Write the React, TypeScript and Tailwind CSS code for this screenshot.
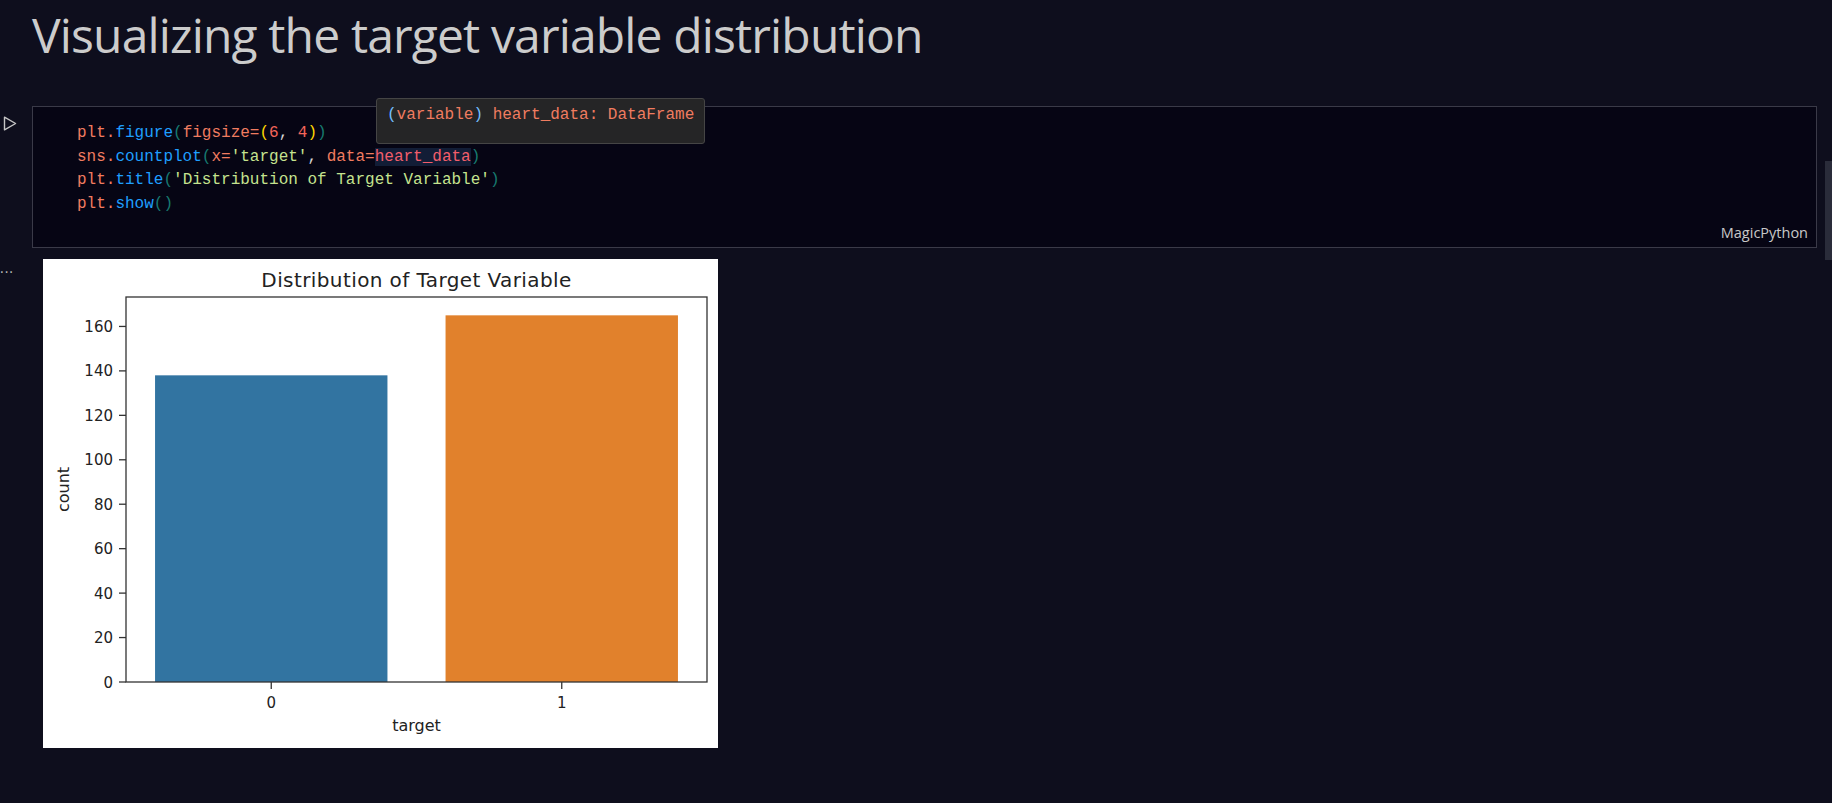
import { FC } from 'react';

const mono = "font-['Liberation_Mono',monospace]";

const SALMON = 'text-[#f07c60]';
const BLUE = 'text-[#1f9fff]';
const TEAL = 'text-[#177a70]';
const GOLD = 'text-[#ffd700]';
const STR = 'text-[#c5e38f]';
const PLAIN = 'text-[#d4d4d4]';

const yTicks = [0, 20, 40, 60, 80, 100, 120, 140, 160];

// axes area inside the figure, in figure pixels
const AX = { left: 83, right: 664, top: 38, bottom: 423 };
const yPos = (v: number) => AX.bottom - (v * (AX.bottom - AX.top)) / 173.25;
const unit = (AX.right - AX.left) / 2;
const xPos = (v: number) => AX.left + (v + 0.5) * unit;

const bars = [
  { label: '0', value: 138, color: '#3274a1' },
  { label: '1', value: 165, color: '#e1812c' },
];

const CountPlot: FC = function () {
  return (
    <div className="h-[489px] w-[675px] bg-white">
      <svg width="675" height="489" viewBox="0 0 675 489" className="font-['DejaVu_Sans',sans-serif]">
        <text x={373.5} y={28} textAnchor="middle" fontSize="20" letterSpacing="0.4" fill="#222">
          Distribution of Target Variable
        </text>
        {bars.map((b, i) => (
          <rect
            key={b.label}
            x={xPos(i) - unit * 0.4}
            y={yPos(b.value)}
            width={unit * 0.8}
            height={AX.bottom - yPos(b.value)}
            fill={b.color}
          />
        ))}
        <rect
          x={AX.left}
          y={AX.top}
          width={AX.right - AX.left}
          height={AX.bottom - AX.top}
          fill="none"
          stroke="#333"
          strokeWidth="1.3"
        />
        {yTicks.map((t) => (
          <g key={t}>
            <line x1={AX.left - 7} x2={AX.left} y1={yPos(t)} y2={yPos(t)} stroke="#333" strokeWidth="1.3" />
            <text x={AX.left - 13} y={yPos(t) + 5.5} textAnchor="end" fontSize="15" fill="#222">
              {t}
            </text>
          </g>
        ))}
        {bars.map((b, i) => (
          <g key={b.label}>
            <line x1={xPos(i)} x2={xPos(i)} y1={AX.bottom} y2={AX.bottom + 7} stroke="#333" strokeWidth="1.3" />
            <text x={xPos(i)} y={449} textAnchor="middle" fontSize="15" fill="#222">
              {b.label}
            </text>
          </g>
        ))}
        <text x={373.5} y={472} textAnchor="middle" fontSize="16" fill="#222">
          target
        </text>
        <text
          x={0}
          y={0}
          transform="translate(26 230.5) rotate(-90)"
          textAnchor="middle"
          fontSize="16"
          fill="#222"
        >
          count
        </text>
      </svg>
    </div>
  );
};

const App: FC = function () {
  return (
    <div className="relative h-[803px] w-[1832px] overflow-hidden bg-[#0e0e1d] font-['Open_Sans',sans-serif]">
      <h1 className="pl-[32px] pt-[2px] text-[48px] font-normal leading-[66px] tracking-[-0.85px] text-[#cccccc]">
        Visualizing the target variable distribution
      </h1>

      <div className="mt-[38px] flex">
        <div className="flex w-[32px] shrink-0 items-start pl-[3px] pt-[10px]">
          <svg width="14" height="15" viewBox="0 0 14 15" fill="none">
            <path d="M1.5 1.2 L12.6 7.5 L1.5 13.8 Z" stroke="#c5c5c5" strokeWidth="1.4" strokeLinejoin="round" />
          </svg>
        </div>
        <div className="relative mr-[15px] h-[142px] flex-1 border border-[#3a3a48] bg-[#060514]">
          <div className={`${mono} pl-[44px] pt-[15px] text-[16px] leading-[23.5px] whitespace-pre`}>
            <div>
              <span className={SALMON}>plt.</span>
              <span className={BLUE}>figure</span>
              <span className={TEAL}>(</span>
              <span className={SALMON}>figsize=</span>
              <span className={GOLD}>(</span>
              <span className="text-[#f4665a]">6</span>
              <span className={PLAIN}>, </span>
              <span className="text-[#f4665a]">4</span>
              <span className={GOLD}>)</span>
              <span className={TEAL}>)</span>
            </div>
            <div>
              <span className={SALMON}>sns.</span>
              <span className={BLUE}>countplot</span>
              <span className={TEAL}>(</span>
              <span className={SALMON}>x=</span>
              <span className={STR}>'target'</span>
              <span className={PLAIN}>, </span>
              <span className={SALMON}>data=</span>
              <span className="bg-[#121d36] text-[#f35d6b]">heart_data</span>
              <span className={TEAL}>)</span>
            </div>
            <div>
              <span className={SALMON}>plt.</span>
              <span className={BLUE}>title</span>
              <span className={TEAL}>(</span>
              <span className={STR}>'Distribution of Target Variable'</span>
              <span className={TEAL}>)</span>
            </div>
            <div>
              <span className={SALMON}>plt.</span>
              <span className={BLUE}>show</span>
              <span className={TEAL}>()</span>
            </div>
          </div>
          <span className="absolute bottom-[3px] right-[8px] text-[14.5px] text-[#c8c8c8]">MagicPython</span>

          <div
            className={`${mono} absolute left-[343px] top-[-9px] h-[46px] w-[329px] rounded-[3px] border border-[#454545] bg-[#252526] px-[10px] pt-[5px] text-[16px] leading-[22px] whitespace-pre`}
          >
            <span className="text-[#75beff]">(</span>
            <span className={SALMON}>variable</span>
            <span className="text-[#75beff]">)</span>
            <span className={SALMON}> heart_data: DataFrame</span>
          </div>
        </div>
      </div>

      <div className="mt-[11px] flex">
        <div className="w-[43px] shrink-0 pt-[2px] text-[14px] leading-[14px] tracking-[1px] text-[#bbbbbb]">...</div>
        <CountPlot />
      </div>

      <div className="absolute right-0 top-[161px] h-[99px] w-[7px] bg-[#2a2c3a]" />
    </div>
  );
};

export default App;
